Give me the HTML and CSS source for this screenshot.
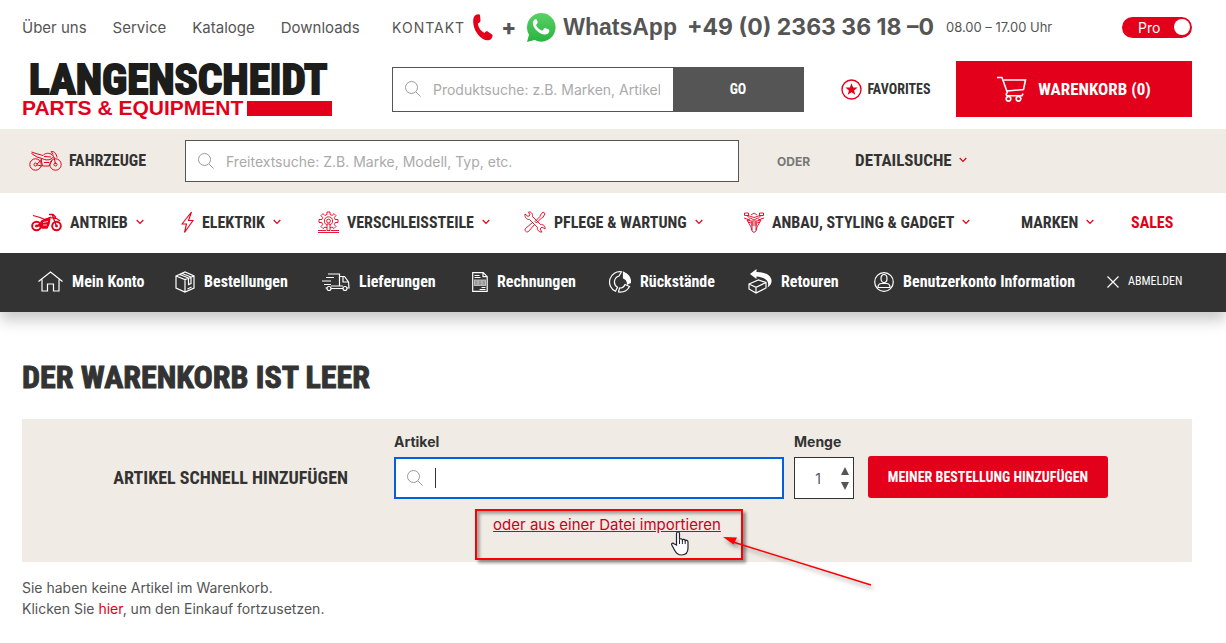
FILE: index.html
```html
<!DOCTYPE html>
<html lang="de">
<head>
  <meta charset="utf-8">
  <meta name="viewport" content="width=device-width, initial-scale=1">
  <title>Warenkorb</title>
  <link rel="stylesheet" href="styles.css">
</head>
<body>
  <!-- shared icons -->
  <svg class="sprite" width="0" height="0" aria-hidden="true">
    <symbol id="i-search" viewBox="0 0 16 16"><circle cx="6.5" cy="6.5" r="6"/><path d="M11 11l4.5 4.5"/></symbol>
    <symbol id="i-chevron" viewBox="0 0 8 6"><path d="M.7 1l3.300 3.300L7.300 1"/></symbol>
  </svg>

  <header>
    <div class="topbar container">
      <nav class="top-links">
        <a href="#">Über uns</a>
        <a href="#">Service</a>
        <a href="#">Kataloge</a>
        <a href="#">Downloads</a>
      </nav>
      <div class="contact">
        <span class="contact-label">KONTAKT</span>
        <svg class="phone-icon" width="20" height="27" viewBox="0 0 20 27"><path fill="#e2001a" d="M2 1.500C4 0 6.500-.2 7 1l.5 5.500C7.500 8 6 9 4.800 9.500c.6 4.500 3 7.500 6.700 9.500.7-1.200 1.800-2 3.200-1.500l4.300 3c1 .9.800 2.300-.7 4.200-2 2-5.500 2-8.300.2C4.500 21.500.8 15.500.3 9 0 5.500.5 2.800 2 1.500z"/></svg>
        <span class="plus">+</span>
        <svg class="wa-icon" width="31" height="31" viewBox="0 0 31 31">
          <defs><linearGradient id="wa" x1="0" y1="0" x2="0" y2="1"><stop offset="0" stop-color="#5bd066"/><stop offset="1" stop-color="#27b43e"/></linearGradient></defs>
          <path fill="url(#wa)" d="M1 30l2-7.300A14.300 14.300 0 1 1 8.600 28z"/>
          <path fill="#fff" d="M11 8.200c-.4-.9-.8-.9-1.400-.9-1.200 0-2.700 1.500-2.700 3.900 0 5 6.500 11.300 12 11.300 2.600 0 4.300-1.500 4.500-3.700 0-.7-.2-.9-.7-1.200l-3.300-1.500c-.6-.2-.9-.1-1.300.4l-1.300 1.700c-.3.4-.7.400-1.300.2-2.200-1-4-2.500-5.200-4.700-.2-.4-.2-.8.1-1.100l1.200-1.500c.2-.3.200-.7.100-1z"/>
        </svg>
        <span class="wa-name">WhatsApp</span>
        <a class="phone" href="tel:+4923633618">+49 (0) 2363 36 18 –0</a>
        <span class="hours">08.00 – 17.00 Uhr</span>
        <button class="pro" type="button">Pro <i></i></button>
      </div>
    </div>

    <div class="mainbar container">
      <a class="logo" href="#">
        <span class="logo-name">LANGENSCHEIDT</span>
        <span class="logo-sub">PARTS &amp; EQUIPMENT<i></i></span>
      </a>
      <div class="tools">
        <form class="product-search">
          <svg class="search-icon" width="16" height="16"><use href="#i-search"/></svg>
          <input type="text" aria-label="Produktsuche" placeholder="Produktsuche: z.B. Marken, Artikel">
          <button type="button">GO</button>
        </form>
        <a class="favorites" href="#">
          <svg width="21" height="21" viewBox="0 0 21 21"><circle cx="10.500" cy="10.500" r="9.500" fill="none" stroke="#e2001a" stroke-width="1.400"/><path fill="#e2001a" d="M10.500 4.200l1.600 4.200 4.500.2-3.500 2.800 1.200 4.400-3.800-2.500-3.800 2.500 1.200-4.400-3.500-2.800 4.500-.2z"/></svg>
          FAVORITES
        </a>
        <a class="cart" href="#">
          <svg width="30" height="26" viewBox="0 0 30 26" fill="none" stroke="#fff" stroke-width="1.600"><path d="M0 1.500h5l5.500 15.500M7 4h21.500l-2 9.500-16.500 1.500M10.500 17c-2 .5-1.500 2.700 0 2.700h14.500l1-2"/><circle cx="11.500" cy="22.800" r="2.300"/><circle cx="21.500" cy="22.800" r="2.300"/></svg>
          WARENKORB (0)
        </a>
      </div>
    </div>

    <div class="vehicle-bar">
      <div class="vehicle-row container">
        <a class="vehicles" href="#">
          <svg width="33" height="21" viewBox="0 0 33 21" fill="none" stroke="#e2001a" stroke-width="1"><circle cx="6.500" cy="14.500" r="5.700"/><circle cx="26.500" cy="14.500" r="5.700"/><circle cx="6.500" cy="14.500" r="1.500"/><circle cx="26.500" cy="14.500" r="1.500"/><path d="M2.500 2l4.500 1.500L14 5.500C15.500 3.500 19 2.500 22 4l3 2.500-3 2.500c-3 1.500-6 1-9-.5L8 7 2.500 3.500M15 6.500l7 .5M8 14l5-4.500M12 9l1.500 7H20l3-5.500M15 12.500h5M24 4.500L22 1M23 1.500c2.500 0 4.500 2.500 5 6M25 7l1.500 7M8 15l5 1"/></svg>
          FAHRZEUGE
        </a>
        <label class="free-search">
          <svg class="search-icon" width="16" height="16"><use href="#i-search"/></svg>
          <input type="text" aria-label="Freitextsuche" placeholder="Freitextsuche: Z.B. Marke, Modell, Typ, etc.">
        </label>
        <div class="detail">
          <span class="or">ODER</span>
          <a href="#">DETAILSUCHE <svg class="chevron" width="8" height="6"><use href="#i-chevron"/></svg></a>
        </div>
      </div>
    </div>

    <nav class="category-nav container">
      <a href="#">
        <svg width="31" height="19" viewBox="0 0 31 19" fill="none" stroke="#e2001a" stroke-width="1.300"><circle cx="5.500" cy="13" r="4.300" stroke-width="2"/><circle cx="25.500" cy="13" r="4.300" stroke-width="2"/><circle cx="5.500" cy="13" r=".8"/><circle cx="25.500" cy="13" r=".8"/><path d="M2 2.500l7 2 5 2 6-2.500M21 1l4 11M18 1.500h4l3 3M20 5c3-1 6 0 9 3"/><path fill="#e2001a" d="M10.500 8l4.500-2 4-1-1 6-2 4h-5l-2-3zM6 13l5-4 1 4z"/><path stroke="#fff" stroke-width=".8" d="M12 9.500l5-1M12 12h4"/></svg>
        ANTRIEB <svg class="chevron" width="8" height="6"><use href="#i-chevron"/></svg>
      </a>
      <a href="#">
        <svg width="13" height="23" viewBox="0 0 13 23" fill="none" stroke="#e2001a" stroke-width="1.100"><path d="M10.500 1L1 13h4.500L3.500 21.500 12 9.500H7.500z"/></svg>
        ELEKTRIK <svg class="chevron" width="8" height="6"><use href="#i-chevron"/></svg>
      </a>
      <a href="#">
        <svg width="21" height="22" viewBox="0 0 21 22" fill="none" stroke="#e2001a" stroke-width=".9"><path d="M9 3.500V1h3v2.500l2.200.9L16 2.600l2 2-1.700 1.900.8 2H20v3h-2.800l-.9 2.200 1.700 1.800-2 2-2-1.500-2 .8H9l-2-.8-2 1.500-2-2 1.700-1.800-.9-2.200H1v-3h2.900l.8-2L3 4.600l2-2 1.800 1.800z"/><circle cx="10.500" cy="10" r="4.200"/><circle cx="10.500" cy="10" r="1.900"/><path fill="#fff" d="M9 13h3v6.500H9z"/><path d="M0 19.500h8M13 19.500h8M0 21.500h21"/></svg>
        VERSCHLEISSTEILE <svg class="chevron" width="8" height="6"><use href="#i-chevron"/></svg>
      </a>
      <a href="#">
        <svg width="22" height="22" viewBox="0 0 22 22" fill="none" stroke="#e2001a" stroke-width=".9"><path d="M1 3l3 2.500L6 4 4.500 1C7 .5 9 2.500 8.500 5.500l8 8C19 13 21.500 15 21 18l-3-2-2 2 2 3c-3 .5-5-2-4.500-4.500l-8-8C3 9 .5 6.500 1 3zM19 1l2 1.500-2 4-1.500.5-5 5-1.500-1.500 5-5L16.500 4zM9.500 12.500l-1-1-7 6c-1.500 2 1 4.500 3 3l6-7z"/></svg>
        PFLEGE &amp; WARTUNG <svg class="chevron" width="8" height="6"><use href="#i-chevron"/></svg>
      </a>
      <a href="#">
        <svg width="20" height="21" viewBox="0 0 20 21" fill="none" stroke="#e2001a" stroke-width=".9"><path d="M.5 1h4v2.500h-4zM15.500 1h4v2.500h-4zM3 3.500L6.500 7M17 3.500L13.500 7M4 3.500l6 2 6-2M7 3l3-2 3 2M0 6l6 2M20 6l-6 2M3 8l4 7 1 4 2 1.500L12 19l1-4 4-7-4 1H7zM6.500 6L10 8l3.500-2M7 11h6M7 13h6M8 9v9M12 9v9M4 10l3 1M16 10l-3 1"/></svg>
        ANBAU, STYLING &amp; GADGET <svg class="chevron" width="8" height="6"><use href="#i-chevron"/></svg>
      </a>
      <a href="#">MARKEN <svg class="chevron" width="8" height="6"><use href="#i-chevron"/></svg></a>
      <a class="sales" href="#">SALES</a>
    </nav>

    <div class="account-bar">
      <nav class="account-nav container">
        <a href="#"><svg width="25" height="21" viewBox="0 0 25 21"><path d="M.5 10.500l12-9.500 12 9.500M4 8.500v11.500h5.500v-7h6v7H21V8.500"/></svg>Mein Konto</a>
        <a href="#"><svg width="20" height="22" viewBox="0 0 20 22"><path d="M1 5l9-4 9 4v12l-9 4-9-4zM1 5l9 3.500L19 5M10 8.500V21M4.500 3.500l9 3.500M7 2.500L16 6M13.500 7.500v6l2.500-1V6.500M12.500 18l4-2"/></svg>Bestellungen</a>
        <a href="#"><svg width="28" height="18" viewBox="0 0 28 18"><path d="M6 1h11.500v12M4 4.500h8M0 8h9M2 11.500h7M17.500 3.500h5l4 5.500.5 6H25M3.500 15H5M9 15.500h12M9 13h12M21 4v5h5"/><circle cx="7" cy="15.500" r="2"/><circle cx="23" cy="15.500" r="2"/></svg>Lieferungen</a>
        <a href="#"><svg width="16" height="20" viewBox="0 0 16 20"><path d="M.7.700h10.500l4 4v14.600H.7zM11 .7v4h4.300M2.500 3.500h5M2.500 5.500h6M9.500 15.500h4M7.500 17.500h6"/><path fill="#999" stroke="#bbb" d="M2.500 8h11v5.500h-11zM6 8v5.500M10 8v5.500"/></svg>Rechnungen</a>
        <a href="#"><svg width="22" height="22" viewBox="0 0 22 22"><path d="M12.500.8A10.300 10.300 0 0 0 6.500 20.300l2-4A6.200 6.200 0 0 1 10 5z"/><path fill="#fff" d="M14.500 1.200a10.500 10.500 0 0 1 7 10.300l-3 1.500c0-3-1.500-5-4-6z"/><path d="M20.500 15.500c-2 4-6 6-11 5.500l1-4c3 .2 4.500-1 5.500-3.500z"/></svg>Rückstände</a>
        <a href="#"><svg width="24" height="25" viewBox="0 0 24 25"><path d="M1 15l9.500-4 7.500 2.500v5.500L8 24l-7-4zM1 15l7 3.300 10-4.800M8 18.300V24"/><path fill="#fff" stroke="none" d="M2 5l6.500-5v3c7 0 14 2 15 8 .4 3-.8 5.500-4 7.500 2.500-6-1.500-10-11-11v2.500z"/></svg>Retouren</a>
        <a href="#"><svg width="20" height="20" viewBox="0 0 20 20"><circle cx="10" cy="10" r="9.300"/><ellipse cx="10" cy="6.500" rx="3" ry="4"/><path d="M4 15.500c0-3 1.500-4 3.500-4h5c2 0 3.500 1 3.500 4z"/></svg>Benutzerkonto Information</a>
        <a class="logout" href="#"><svg width="12" height="12" viewBox="0 0 12 12"><path d="M.5.5l11 11M11.500.5l-11 11"/></svg>ABMELDEN</a>
      </nav>
    </div>
  </header>

  <main class="container">
    <h1>DER WARENKORB IST LEER</h1>

    <section class="quick-add">
      <form class="quick-form">
        <h2>ARTIKEL SCHNELL HINZUFÜGEN</h2>
        <div class="field">
          <label for="article">Artikel</label>
          <div class="article-box">
            <svg class="search-icon" width="16" height="16"><use href="#i-search"/></svg>
            <i class="caret"></i>
            <input type="text" id="article">
          </div>
        </div>
        <div class="field">
          <label for="amount">Menge</label>
          <div class="amount-box">
            <input type="text" id="amount" value="1">
            <div class="steps">
              <button type="button" aria-label="Mehr"><svg width="8" height="8" viewBox="0 0 8 8"><path d="M4 0l4 8H0z"/></svg></button>
              <button type="button" aria-label="Weniger"><svg width="8" height="8" viewBox="0 0 8 8"><path d="M4 8l4-8H0z"/></svg></button>
            </div>
          </div>
        </div>
        <button class="add-btn" type="button">MEINER BESTELLUNG HINZUFÜGEN</button>
      </form>
      <div class="import">
        <a href="#">oder aus einer Datei importieren</a>
        <div class="marker"></div>
        <svg class="hand" width="20" height="25" viewBox="0 0 20 25"><path fill="#fff" stroke="#223" stroke-width="1.200" d="M5.500 14V2.500C5.500.5 8.500.5 8.500 2.500v6c.5-1.200 2.700-.9 2.900.5.600-1 2.500-.8 2.800.7.700-.9 2.800-.5 2.800 1.300v6c0 4-2 7-6.500 7-4 0-5.500-2-7-5l-2.700-5c-.6-1.600 1-2.300 2.200-1.300z"/><path fill="none" stroke="#223" d="M8.500 8.500V13M11.400 9v4M14.200 9.700V13"/></svg>
        <svg class="arrow" width="156" height="58" viewBox="0 0 156 58"><path stroke="#f00" stroke-width="1.600" d="M10 6l138 43"/><path fill="#f00" d="M0 1l14 .4-3.500 7z"/></svg>
      </div>
    </section>

    <p class="empty-note">Sie haben keine Artikel im Warenkorb.<br>Klicken Sie <a href="#">hier</a>, um den Einkauf fortzusetzen.</p>
  </main>
</body>
</html>
```
FILE: styles.css
```css
* {
  box-sizing: border-box;
}

body {
  margin: 0;
  background: #fff;
  color: #555;
  font-family: Inter, "Liberation Sans", sans-serif;
  font-size: 14px;
  line-height: 21px;
}

a {
  color: inherit;
  text-decoration: none;
}

button,
input {
  font: inherit;
  color: inherit;
  border: 0;
  padding: 0;
  margin: 0;
  min-width: 0;
}

button {
  cursor: pointer;
}

svg {
  display: block;
  flex: none;
}

input::placeholder {
  color: #aaa;
  opacity: 1;
}

.sprite {
  position: absolute;
}

.container {
  padding: 0 34px 0 22px;
}

.search-icon {
  fill: none;
  stroke: #999;
}

.chevron {
  fill: none;
  stroke: #e2001a;
  stroke-width: 1.2;
}

/* top bar */
.topbar,
.mainbar {
  display: grid;
  grid-template-columns: 370fr 800fr;
  align-items: center;
}

.topbar {
  height: 54px;
}

.top-links {
  display: flex;
  gap: 26px;
  font-size: 15px;
}

.contact {
  display: flex;
  align-items: center;
  white-space: nowrap;
}

.contact-label {
  letter-spacing: 1px;
}

.phone-icon {
  margin-left: 8px;
}

.plus {
  margin: 0 10px 0 8px;
  font-size: 22px;
  font-weight: 800;
}

.wa-name {
  margin-left: 6px;
  font-family: "Liberation Sans", Arial, sans-serif;
  font-size: 23px;
  font-weight: bold;
}

.phone {
  margin-left: 10px;
  font-size: 23px;
  font-weight: 700;
}

.hours {
  margin-left: 12px;
  font-size: 13px;
}

.pro {
  display: flex;
  align-items: center;
  justify-content: space-between;
  width: 70px;
  height: 21px;
  margin-left: auto;
  padding: 0 2px 0 16px;
  border-radius: 11px;
  background: #e2001a;
  color: #fff;
}

.pro i {
  width: 16px;
  height: 16px;
  border-radius: 50%;
  background: #fff;
}

/* logo, product search, cart */
.mainbar {
  height: 75px;
  padding-bottom: 5px;
}

.logo {
  width: 310px;
}

.logo-name,
.logo-sub {
  display: flex;
  font-weight: bold;
}

.logo-name {
  margin-bottom: 4px;
  padding-left: 7px;
  color: #1d1d1b;
  font-family: "Liberation Sans Narrow", "Roboto Condensed", "Open Sans", sans-serif;
  font-size: 43px;
  line-height: 34px;
  -webkit-text-stroke: 2px #1d1d1b;
}

.logo-sub {
  align-items: center;
  gap: 4px;
  color: #e2001a;
  font-family: "Liberation Sans", Arial, sans-serif;
  font-size: 21px;
  line-height: 16px;
  white-space: nowrap;
}

.logo-sub i {
  flex: 1;
  height: 15px;
  background: #e2001a;
}

.tools {
  display: flex;
  align-items: center;
}

.product-search {
  display: flex;
  align-items: center;
  flex: 1;
  height: 45px;
  padding-left: 12px;
  border: 1px solid #555;
}

.product-search input {
  flex: 1;
  margin: 0 13px 0 12px;
}

.product-search button {
  width: 130px;
  height: 45px;
  background: #555;
  color: #fff;
}

.product-search button,
.favorites,
.cart,
.vehicles,
.detail a,
.category-nav,
.account-nav,
.add-btn,
h1,
h2 {
  font-family: "Liberation Sans Narrow", "Roboto Condensed", "Open Sans", sans-serif;
  font-weight: bold;
}

.favorites {
  display: flex;
  align-items: center;
  justify-content: center;
  gap: 6px;
  width: 152px;
  padding-left: 11px;
  color: #333;
}

.cart {
  display: flex;
  align-items: center;
  justify-content: center;
  gap: 11px;
  width: 236px;
  height: 56px;
  background: #e2001a;
  color: #fff;
  font-size: 17px;
}

/* vehicle search */
.vehicle-bar {
  background: #f0ebe5;
}

.vehicle-row {
  display: grid;
  grid-template-columns: 163fr 554fr 453fr;
  align-items: center;
  height: 64px;
}

.vehicles,
.detail a {
  display: flex;
  align-items: center;
  gap: 7px;
  padding-bottom: 2px;
  color: #333;
  font-size: 16px;
}

.vehicles {
  padding-left: 7px;
}

.detail a {
  font-size: 17px;
}

.free-search {
  display: flex;
  align-items: center;
  gap: 12px;
  height: 42px;
  padding: 0 12px;
  border: 1px solid #555;
  background: #fff;
}

.free-search input {
  flex: 1;
}

.detail {
  display: flex;
  align-items: center;
  gap: 45px;
  padding-left: 38px;
}

.or {
  color: #777;
  font-size: 12px;
  font-weight: bold;
}

/* categories */
.category-nav {
  display: grid;
  grid-template-columns: 150fr 137fr 206fr 220fr 277fr 110fr 61fr;
  height: 60px;
  padding-left: 31px;
  padding-bottom: 2px;
  color: #333;
  font-size: 16px;
  white-space: nowrap;
}

.category-nav a,
.account-nav a {
  display: flex;
  align-items: center;
  gap: 8px;
}

.account-nav a {
  gap: 9px;
}

.category-nav .sales {
  color: #e2001a;
}

/* account bar */
.account-bar {
  background: #333;
  box-shadow: 0 8px 14px 0 rgba(0, 0, 0, 0.22);
  clip-path: inset(0 0 -30px 0);
}

.account-nav {
  display: grid;
  grid-template-columns: 137fr 147fr 150fr 137fr 139fr 126fr 233fr 85fr;
  height: 59px;
  padding-left: 38px;
  padding-bottom: 2px;
  color: #fff;
  font-size: 16px;
  white-space: nowrap;
}

.account-nav svg {
  fill: none;
  stroke: #fff;
  stroke-width: 1.2;
}

.account-nav .logout {
  font-size: 12px;
  font-weight: normal;
}

/* cart page */
h1 {
  margin: 46px 0 23px;
  color: #333;
  font-size: 32px;
  line-height: 38px;
  -webkit-text-stroke: 1px #333;
}

.quick-add {
  padding: 12px 0 27px;
  background: #f0ebe5;
}

.quick-form {
  display: grid;
  grid-template-columns: 362fr 390fr 60px 244px;
  column-gap: 10px;
  align-items: end;
  padding-right: 84px;
}

h2 {
  margin: 0;
  padding-right: 36px;
  color: #333;
  font-size: 18px;
  line-height: 42px;
  text-align: right;
  white-space: nowrap;
}

.field label {
  display: block;
  margin-bottom: 4px;
  color: #333;
  font-weight: bold;
  line-height: 22px;
}

.article-box,
.amount-box {
  display: flex;
  align-items: center;
  height: 42px;
  background: #fff;
}

.article-box {
  gap: 12px;
  padding: 0 11px;
  border: 2px solid #0060df;
}

.article-box input {
  flex: 1;
  outline: 0;
}

.caret {
  width: 1px;
  height: 20px;
  background: #333;
}

.amount-box {
  padding-right: 4px;
  border: 1px solid #333;
}

.amount-box input {
  flex: 1;
  width: 0;
  text-align: center;
}

.steps {
  display: grid;
  gap: 7px;
}

.steps button {
  background: none;
}

.steps svg {
  fill: #555;
}

.add-btn {
  height: 42px;
  margin: 0 0 1px 4px;
  border-radius: 3px;
  background: #e2001a;
  color: #fff;
}

.import {
  position: relative;
  width: 264px;
  margin: 15px auto 0;
  font-size: 15px;
  text-align: center;
}

.import a {
  color: #c8001e;
  text-decoration: underline;
}

/* annotation over the import link */
.marker {
  position: absolute;
  top: -5px;
  left: 0;
  width: 268px;
  height: 51px;
  border: 2px solid #f00;
  box-shadow: 3px 3px 3px rgba(0, 0, 0, 0.4), inset 3px 3px 3px rgba(0, 0, 0, 0.3);
  pointer-events: none;
}

.hand {
  position: absolute;
  top: 17px;
  left: 196px;
}

.arrow {
  position: absolute;
  top: 22px;
  left: 248px;
  filter: drop-shadow(2px 3px 2px rgba(0, 0, 0, 0.4));
}

.empty-note {
  margin: 15px 0;
}

.empty-note a {
  color: #e2001a;
}
```
